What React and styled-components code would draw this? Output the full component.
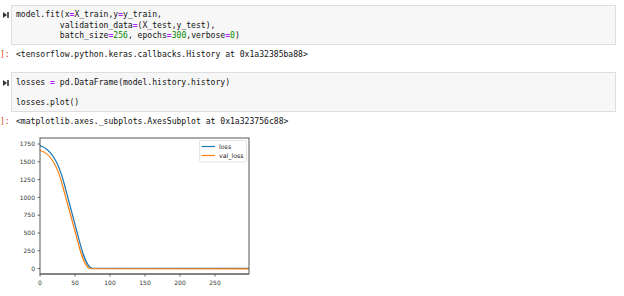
import React from "react";
import styled, { createGlobalStyle } from "styled-components";

const GlobalStyle = createGlobalStyle`
  html, body { margin: 0; padding: 0; background: #ffffff; }
  body { font-family: "DejaVu Sans Mono", monospace; }
`;

const Notebook = styled.div`
  display: flex;
  flex-direction: column;
  padding: 5px 8px 0 0;
  width: 624px;
  box-sizing: border-box;
`;

const InputRow = styled.div`
  display: flex;
  align-items: flex-start;
  margin-top: ${(p) => p.$top || 0}px;
`;

const RunPrompt = styled.div`
  width: 11px;
  flex: none;
  display: flex;
  justify-content: flex-start;
  padding-left: 3px;
  padding-top: ${(p) => p.$pt}px;
  box-sizing: border-box;
`;

const CodeBox = styled.pre`
  flex: 1;
  margin: 0;
  background: #f7f7f7;
  border: 1px solid #dedede;
  padding: ${(p) => p.$pad};
  font-family: "DejaVu Sans Mono", monospace;
  font-size: 8.08px;
  line-height: ${(p) => p.$lh}px;
  color: #111;
  white-space: pre;
  overflow: hidden;
`;

const Op = styled.span`
  color: #aa22ff;
  font-weight: bold;
`;

const Num = styled.span`
  color: #008800;
`;

const OutputRow = styled.div`
  display: flex;
  align-items: center;
  margin-top: 4px;
  height: 10px;
  font-family: "DejaVu Sans Mono", monospace;
  font-size: 8.08px;
  line-height: 10px;
`;

const OutPrompt = styled.div`
  width: 16px;
  flex: none;
  color: #d84315;
`;

const OutText = styled.div`
  color: #111;
  white-space: pre;
`;

const PlotArea = styled.div`
  margin-top: 4px;
  display: flex;
`;

const RunIcon = () => (
  <svg width="6" height="6" viewBox="0 0 6 6">
    <path d="M0 0 L4 3 L0 6 Z" fill="#333" />
    <rect x="4.2" y="0" width="1.6" height="6" fill="#333" />
  </svg>
);

const Chart = () => {
  const yTicks = [
    [1750, 144],
    [1500, 161.8],
    [1250, 179.6],
    [1000, 197.4],
    [750, 215.2],
    [500, 233],
    [250, 250.8],
    [0, 268.6],
  ];
  const xTicks = [
    [0, 40],
    [50, 75],
    [100, 110],
    [150, 145],
    [200, 180],
    [250, 215],
  ];
  const tickFont = { fontFamily: "DejaVu Sans, sans-serif", fontSize: 6 };
  return (
    <svg width="260" height="166" viewBox="0 130 260 166">
      <defs>
        <clipPath id="ax">
          <rect x="40" y="138" width="209" height="136" />
        </clipPath>
      </defs>
      <g clipPath="url(#ax)">
        <path
          d="M40,145.5 C50,148.5 58,160 64,183 L77,232 C80,243 85,267 92,268.2 L249,268.4"
          fill="none"
          stroke="#1f77b4"
          strokeWidth="1.2"
        />
        <path
          d="M40,150.5 C50,153 57,164 62.5,185.5 L75.5,233 C78.5,244 83.5,267.5 90,268.6 L249,268.8"
          fill="none"
          stroke="#ff7f0e"
          strokeWidth="1.2"
        />
      </g>
      <rect x="40" y="138" width="209" height="136" fill="none" stroke="#444" strokeWidth="0.9" />
      <line x1="40" y1="274" x2="249" y2="274" stroke="#777" strokeWidth="1.6" />
      {yTicks.map(([v, y]) => (
        <g key={v}>
          <line x1="37.5" y1={y} x2="40" y2={y} stroke="#444" strokeWidth="0.8" />
          <text x="35" y={y + 2.2} textAnchor="end" fill="#333" {...tickFont}>
            {v}
          </text>
        </g>
      ))}
      {xTicks.map(([v, x]) => (
        <g key={v}>
          <line x1={x} y1="274" x2={x} y2="276.5" stroke="#444" strokeWidth="0.8" />
          <text x={x} y="284.5" textAnchor="middle" fill="#333" {...tickFont}>
            {v}
          </text>
        </g>
      ))}
      <rect x="199.5" y="140.5" width="47" height="21.5" rx="1.5" fill="#fff" stroke="#ddd" strokeWidth="0.8" />
      <line x1="201.5" y1="146.5" x2="215" y2="146.5" stroke="#1f77b4" strokeWidth="1.2" />
      <line x1="201.5" y1="155.5" x2="215" y2="155.5" stroke="#ff7f0e" strokeWidth="1.2" />
      <text x="219" y="148.7" fill="#222" fontFamily="DejaVu Sans, sans-serif" fontSize="6.3">
        loss
      </text>
      <text x="219" y="157.7" fill="#222" fontFamily="DejaVu Sans, sans-serif" fontSize="6.3">
        val_loss
      </text>
    </svg>
  );
};

export default function App() {
  return (
    <>
      <GlobalStyle />
      <Notebook>
        <InputRow>
          <RunPrompt $pt={7}>
            <RunIcon />
          </RunPrompt>
          <CodeBox $pad="3px 4px" $lh={10.7}>
            {"model.fit(x"}<Op>=</Op>{"X_train,y"}<Op>=</Op>{"y_train,\n"}
            {"         validation_data"}<Op>=</Op>{"(X_test,y_test),\n"}
            {"         batch_size"}<Op>=</Op><Num>256</Num>{", epochs"}<Op>=</Op><Num>300</Num>{",verbose"}<Op>=</Op><Num>0</Num>{")"}
          </CodeBox>
        </InputRow>
        <OutputRow>
          <OutPrompt>]:</OutPrompt>
          <OutText>{"<tensorflow.python.keras.callbacks.History at 0x1a32385ba88>"}</OutText>
        </OutputRow>
        <InputRow $top={13}>
          <RunPrompt $pt={8}>
            <RunIcon />
          </RunPrompt>
          <CodeBox $pad="4px 4px" $lh={10}>
            {"losses "}<Op>=</Op>{" pd.DataFrame(model.history.history)\n\n"}
            {"losses.plot()"}
          </CodeBox>
        </InputRow>
        <OutputRow>
          <OutPrompt>]:</OutPrompt>
          <OutText>{"<matplotlib.axes._subplots.AxesSubplot at 0x1a323756c88>"}</OutText>
        </OutputRow>
        <PlotArea>
          <Chart />
        </PlotArea>
      </Notebook>
    </>
  );
}
